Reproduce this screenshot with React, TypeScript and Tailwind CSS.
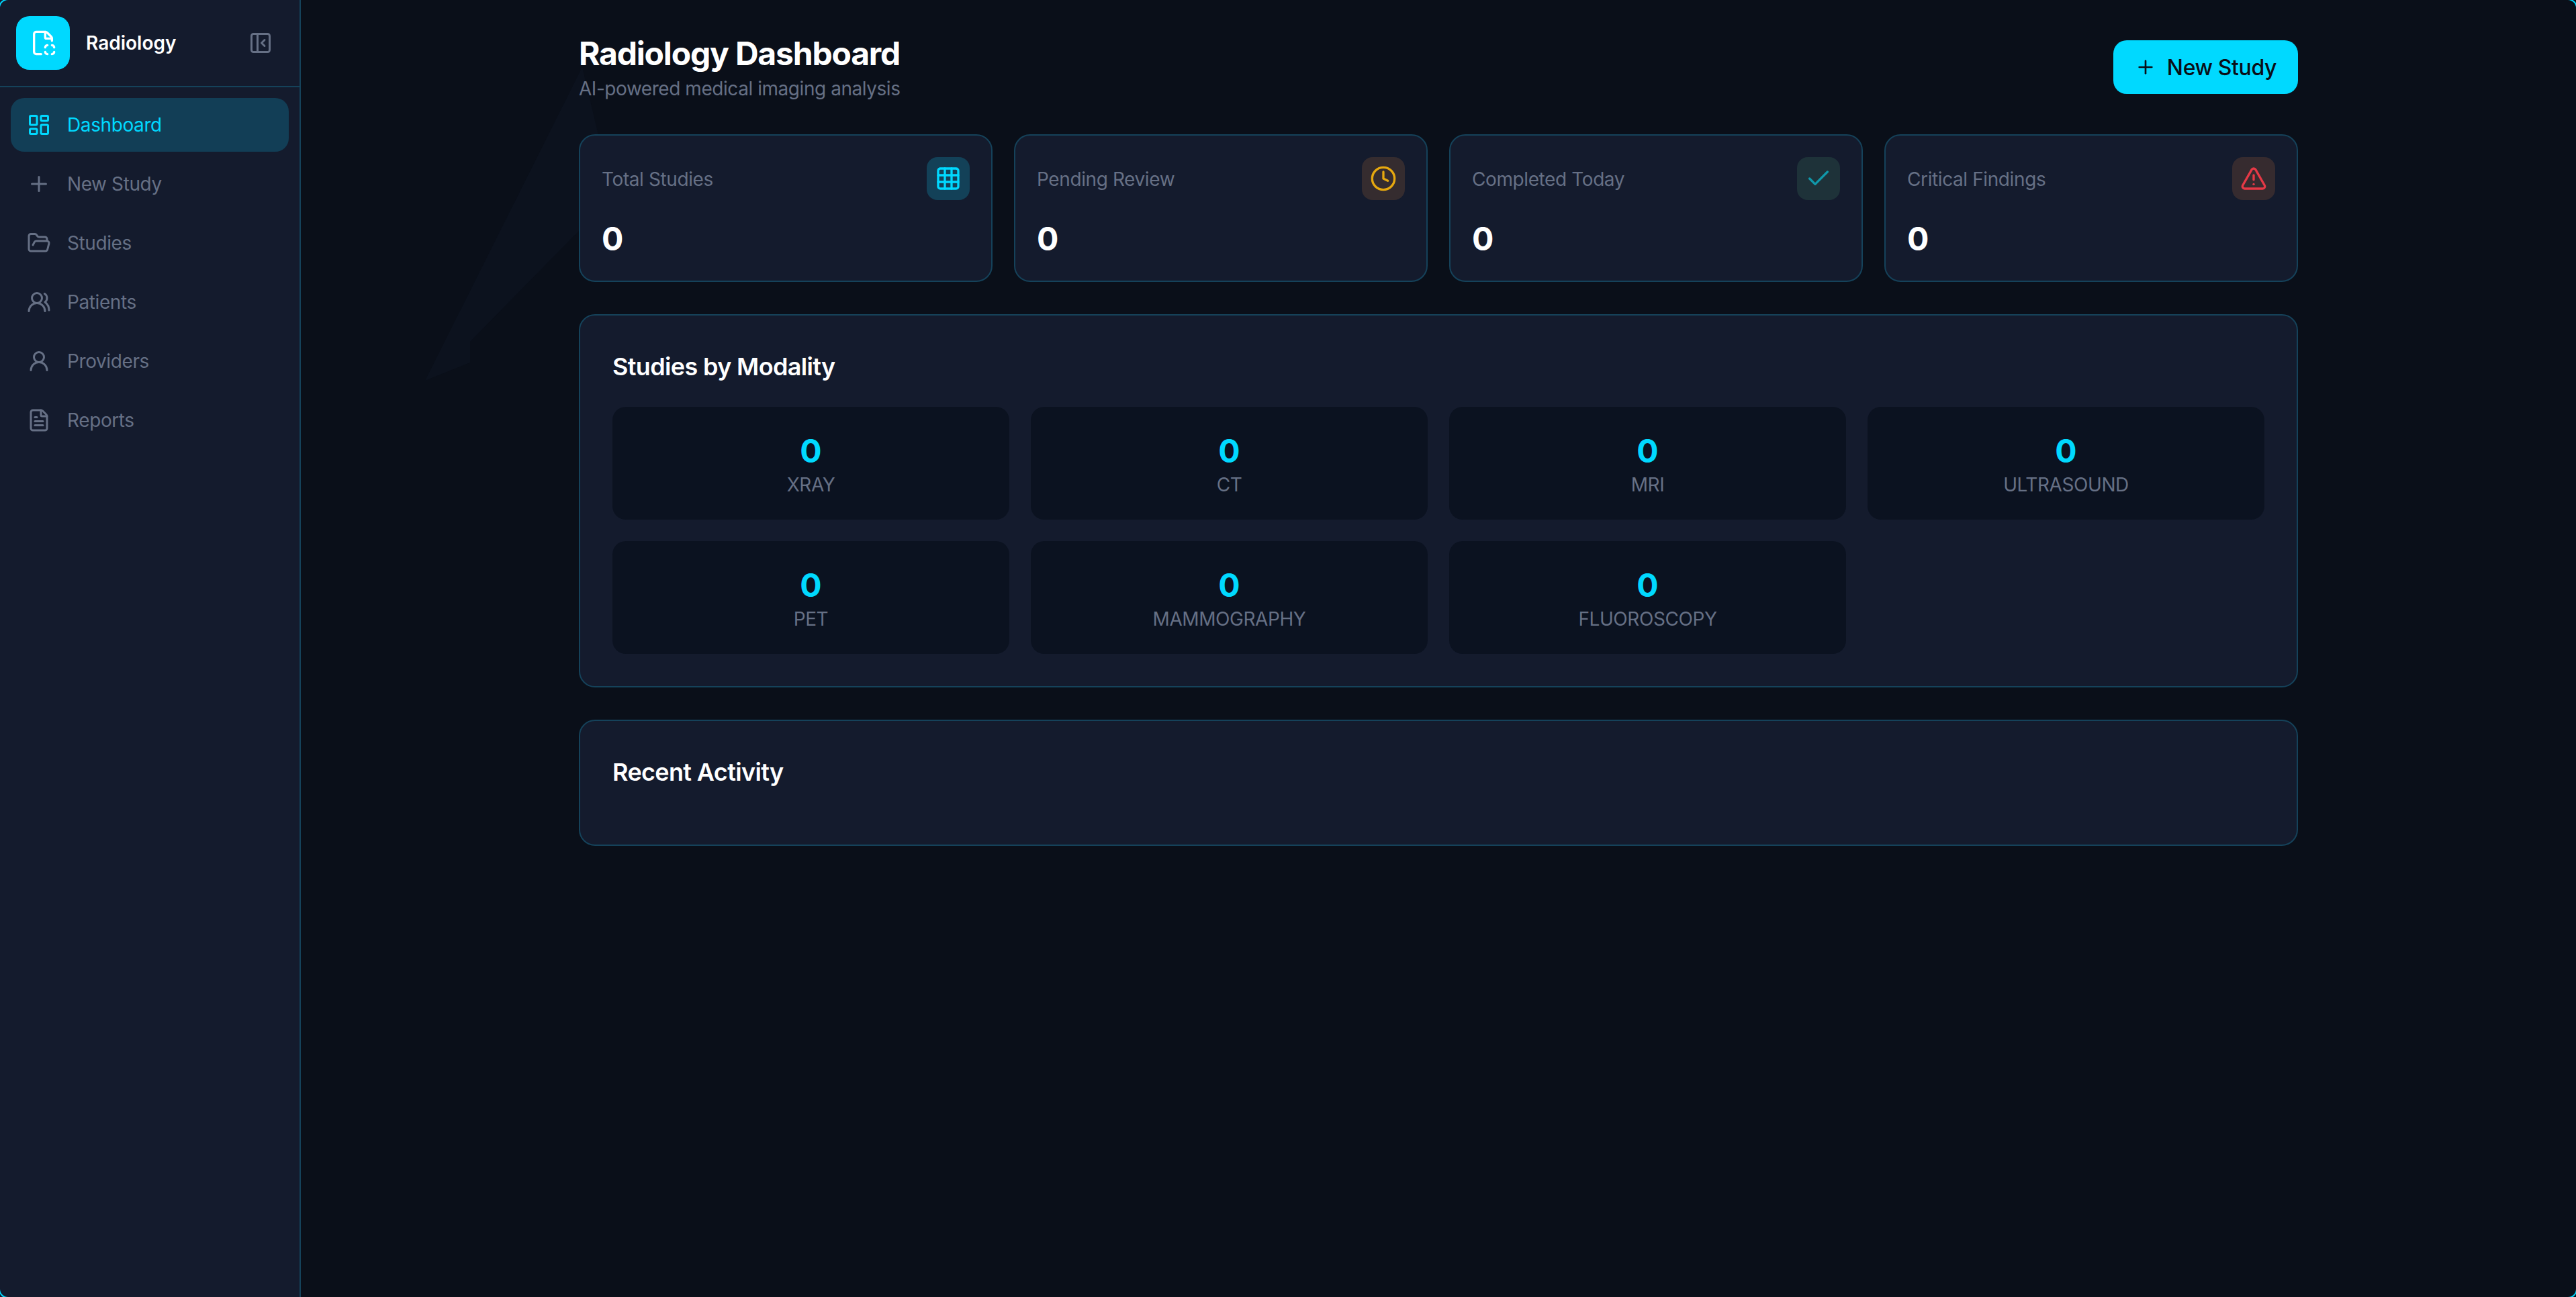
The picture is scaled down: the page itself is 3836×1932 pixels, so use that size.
import {
  Check,
  Clock,
  FileScan,
  FileText,
  FolderOpen,
  Grid3x3,
  LayoutDashboard,
  PanelLeftClose,
  Plus,
  TriangleAlert,
  UserRound,
  UsersRound,
} from 'lucide-react';

const navItems = [
  { label: 'Dashboard', icon: LayoutDashboard, active: true },
  { label: 'New Study', icon: Plus },
  { label: 'Studies', icon: FolderOpen },
  { label: 'Patients', icon: UsersRound },
  { label: 'Providers', icon: UserRound },
  { label: 'Reports', icon: FileText },
];

const stats = [
  { label: 'Total Studies', icon: Grid3x3, box: 'bg-[#134158]', color: 'text-[#00d9ff]' },
  { label: 'Pending Review', icon: Clock, box: 'bg-[#352c2f]', color: 'text-[#e6a80f]' },
  { label: 'Completed Today', icon: Check, box: 'bg-[#1e3239]', color: 'text-[#1097a9]' },
  { label: 'Critical Findings', icon: TriangleAlert, box: 'bg-[#362b2f]', color: 'text-[#e63946]' },
];

const modalities = ['XRAY', 'CT', 'MRI', 'ULTRASOUND', 'PET', 'MAMMOGRAPHY', 'FLUOROSCOPY'];

function Sidebar() {
  return (
    <aside className="relative z-10 flex w-[448px] shrink-0 flex-col border-r-2 border-[#15425a] bg-[#141b2d]">
      <div className="flex h-[130px] items-center justify-between border-b-2 border-[#15425a] px-6">
        <div className="flex items-center gap-6">
          <div className="flex h-20 w-20 items-center justify-center rounded-[20px] bg-[#00d9ff]">
            <FileScan className="h-10 w-10 text-white" />
          </div>
          <span className="text-[28px] leading-[40px] font-semibold text-white">Radiology</span>
        </div>
        <button className="p-4 text-[#667085]">
          <PanelLeftClose className="h-9 w-9" />
        </button>
      </div>

      <nav className="flex flex-col gap-2 p-4">
        {navItems.map(item => (
          <a
            key={item.label}
            className={`flex h-20 items-center gap-6 rounded-[20px] px-6 text-[28px] leading-[40px] tracking-[-0.4px] ${item.active ? 'bg-[#123e56] text-[#00d9ff]' : 'text-[#667085]'}`}
          >
            <item.icon className="h-9 w-9" />
            {item.label}
          </a>
        ))}
      </nav>
    </aside>
  );
}

function SectionCard({ title, children }: { title: string; children?: React.ReactNode }) {
  return (
    <section className="rounded-3xl border-2 border-[#15425a] bg-[#141b2d] p-12">
      <h2 className="mb-8 text-[36px] leading-[56px] font-semibold tracking-[-0.65px] text-white">{title}</h2>
      {children}
    </section>
  );
}

export default function App() {
  return (
    <div className="relative flex h-screen overflow-hidden bg-[#0a0f19] font-[Inter,sans-serif]">
      <Sidebar />

      <main className="relative flex-1 p-12">
        {/* faint background shape */}
        <svg className="absolute top-0 -left-[448px] h-[700px] w-[1000px]" viewBox="0 0 1000 700">
          <polygon points="867,100 892,205 862,344 700,509 700,540 633,567" fill="#0c121e" />
        </svg>

        <div className="relative mx-auto max-w-[2560px]">
          <div className="mb-12 flex items-center justify-between">
            <div>
              <h1 className="text-[48px] leading-[64px] font-bold tracking-[-1.2px] text-white">Radiology Dashboard</h1>
              <p className="text-[28px] leading-[40px] tracking-[-0.45px] text-[#667085]">AI-powered medical imaging analysis</p>
            </div>
            <button className="flex h-20 items-center gap-4 rounded-[20px] bg-[#00d9ff] px-8 text-[32px] font-medium tracking-[-0.4px] text-[#0a0e17]">
              <Plus className="h-8 w-8" />
              <span className="translate-y-px">New Study</span>
            </button>
          </div>

          <div className="mb-12 grid grid-cols-4 gap-8">
            {stats.map(stat => (
              <div key={stat.label} className="rounded-3xl border-2 border-[#15425a] bg-[#141b2d] p-8">
                <div className="mb-6 flex items-center justify-between">
                  <span className="translate-y-px text-[28px] leading-[40px] tracking-[-0.4px] text-[#667085]">{stat.label}</span>
                  <div className={`flex h-16 w-16 items-center justify-center rounded-2xl ${stat.box}`}>
                    <stat.icon className={`h-10 w-10 ${stat.color}`} />
                  </div>
                </div>
                <div className="translate-y-0.5 text-[48px] leading-[64px] font-bold text-white">0</div>
              </div>
            ))}
          </div>

          <div className="mb-12">
            <SectionCard title="Studies by Modality">
              <div className="grid grid-cols-4 gap-8">
                {modalities.map(name => (
                  <div key={name} className="rounded-[20px] bg-[#0b1220] p-8 text-center">
                    <div className="translate-y-0.5 text-[48px] leading-[64px] font-bold text-[#00d9ff]">0</div>
                    <div className="text-[28px] leading-[40px] tracking-[-0.42px] text-[#667085]">{name}</div>
                  </div>
                ))}
              </div>
            </SectionCard>
          </div>

          <SectionCard title="Recent Activity" />
        </div>
      </main>

      {/* window corner highlight, straight edges sit just off the page */}
      <div className="pointer-events-none absolute -inset-[2px] z-20 rounded-[14px] border-2 border-[#00d9ff]" />
    </div>
  );
}
